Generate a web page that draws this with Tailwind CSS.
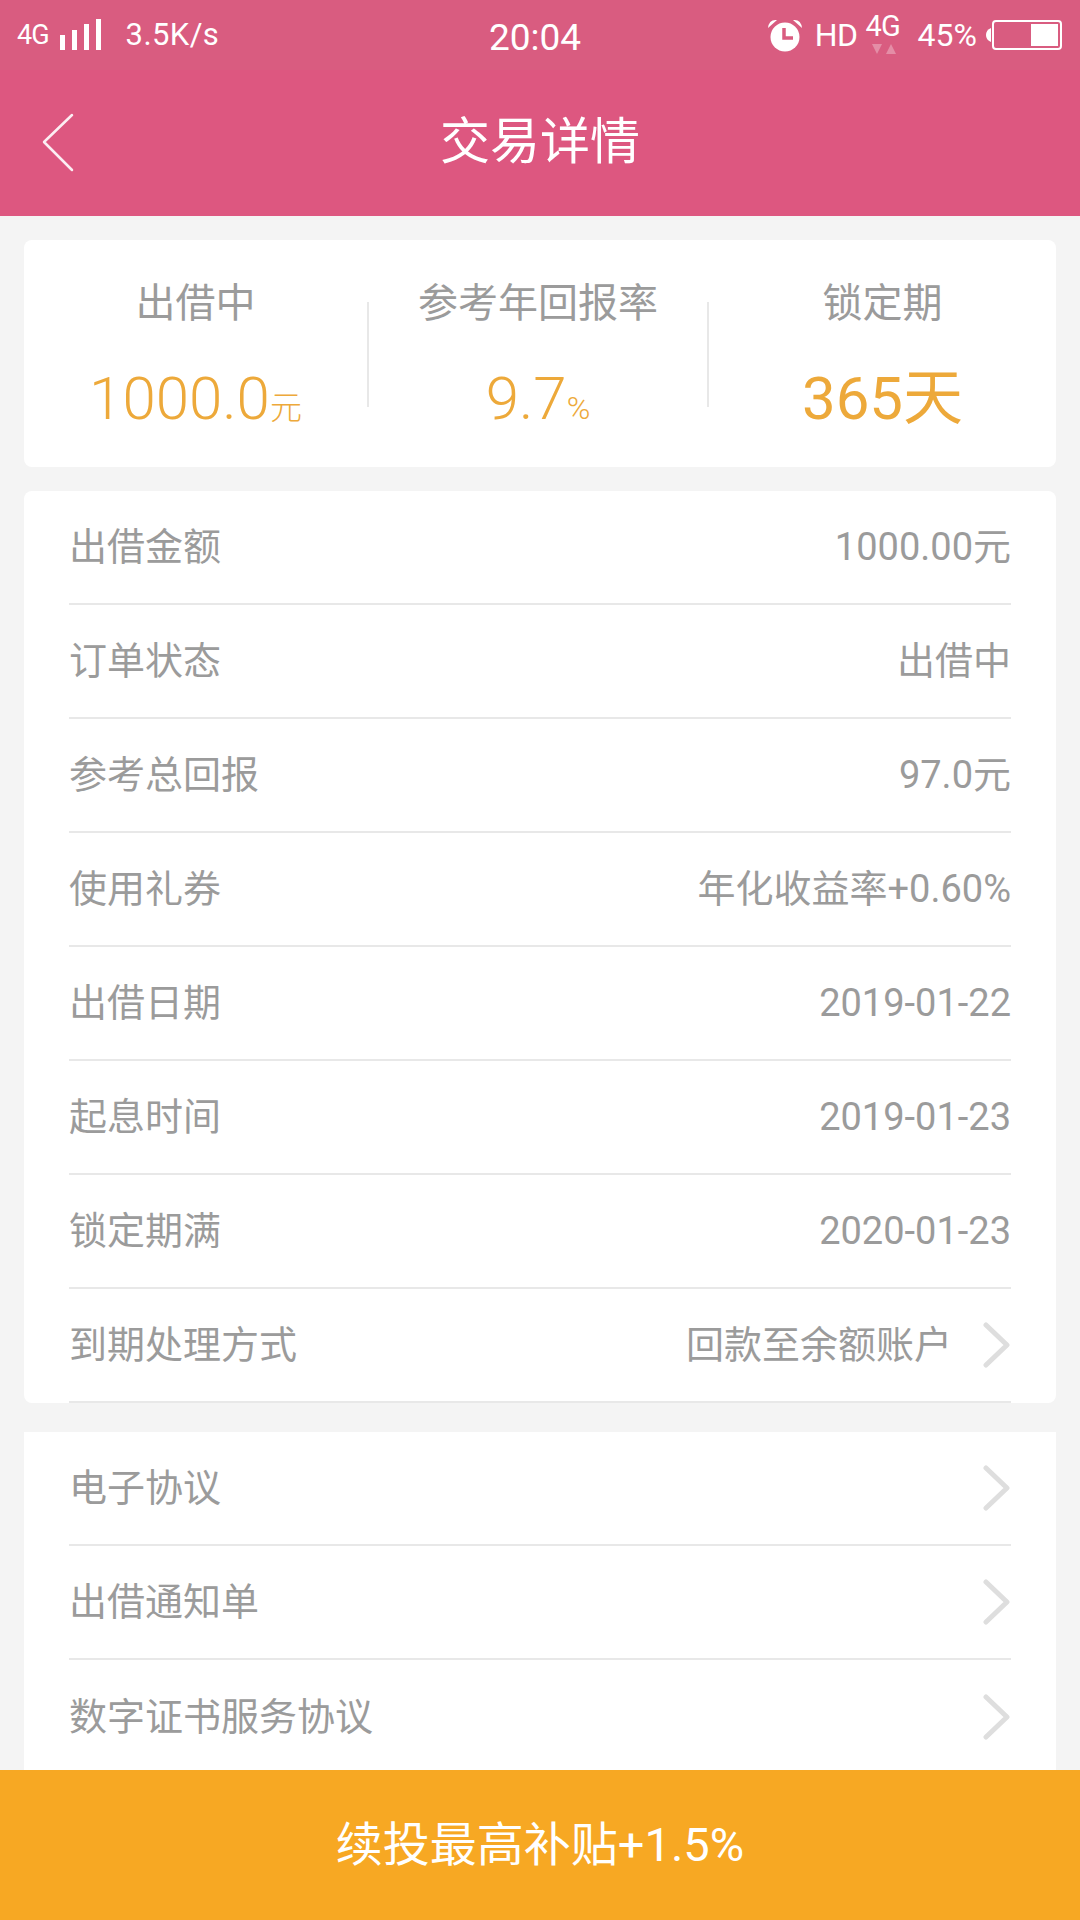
<!DOCTYPE html>
<html lang="zh">
<head>
<meta charset="utf-8">
<script src="https://cdn.jsdelivr.net/npm/@tailwindcss/browser@4"></script>
</head>
<body class="m-0">
<div class="relative w-[1080px] h-[1920px] overflow-hidden bg-[#f4f4f4] font-['Roboto','Noto_Sans_CJK_SC',sans-serif] text-[38px] text-[#9b9b9b]">
  <header class="h-[216px] bg-[#dd5780] text-white">
    <div class="h-[70px] bg-[#d95c80] flex items-center justify-between pl-[17px] pr-[18px] relative">
      <div class="flex items-center">
        <span class="text-[27px] tracking-[-1px]">4G</span>
        <svg class="ml-[11px]" width="42" height="32" viewBox="0 0 42 32" fill="#fff"><rect x="0" y="16" width="5" height="15"/><rect x="12" y="11" width="5" height="20"/><rect x="24" y="5" width="5" height="26"/><rect x="36" y="0" width="5" height="31"/></svg>
        <span class="ml-[24px] text-[31px] tracking-[0.4px]">3.5K/s</span>
      </div>
      <span class="absolute left-[489px] top-[16px] text-[37px] leading-[44px]">20:04</span>
      <div class="flex items-center">
        <svg width="36" height="34" viewBox="0 0 36 34" fill="#fff"><circle cx="18" cy="19" r="14.5"/><path d="M1 10 Q2 1 10 2 Z M35 10 Q34 1 26 2 Z"/><path d="M17 10 V20 H26" fill="none" stroke="#d95c80" stroke-width="3.5"/></svg>
        <span class="ml-[12px] text-[32px] tracking-[-0.5px]">HD</span>
        <span class="relative ml-[8px] w-[38px] h-[34px]">
          <span class="absolute left-0 top-[-9px] text-[29px] leading-[34px] tracking-[-1px]">4G</span>
          <svg class="absolute left-[6px] top-[26px]" width="26" height="11" viewBox="0 0 26 11"><path d="M0 0 H10 L5 10 Z" fill="#fff" fill-opacity=".3"/><path d="M14 10 H24 L19 0 Z" fill="#fff" fill-opacity=".3"/></svg>
        </span>
        <span class="ml-[14px] text-[32px]">45%</span>
        <svg class="ml-[9px]" width="76" height="32" viewBox="0 0 76 32"><path d="M5 9 Q0 11 0 16 Q0 21 5 23 Z" fill="#fff"/><rect x="7" y="2" width="68" height="28" rx="3" fill="none" stroke="#fff" stroke-width="2"/><rect x="45" y="5" width="27" height="22" fill="#fff"/></svg>
      </div>
    </div>
    <div class="h-[146px] relative flex items-center justify-center">
      <svg class="absolute left-[42px] top-[43px]" width="32" height="60" viewBox="0 0 32 60" fill="none" stroke="#fff" stroke-opacity=".9" stroke-width="2.5" stroke-linecap="round" stroke-linejoin="round"><path d="M30 2 L2 29 L30 57"/></svg>
      <h1 class="m-0 text-[50px] font-normal leading-[60px] mt-[-2px]">交易详情</h1>
    </div>
  </header>

  <main class="px-[24px] pt-[24px]">
    <section class="h-[227px] bg-white rounded-[8px] grid grid-cols-[343px_342px_347px]">
      <div class="flex flex-col items-center pt-[36px]">
        <span class="text-[40px] leading-[56px]">出借中</span>
        <span class="mt-[32px] text-[#eda93a] text-[60px] leading-[70px] font-light">1000.0<span class="text-[32px]">元</span></span>
      </div>
      <div class="relative flex flex-col items-center pt-[36px] before:absolute before:left-0 before:top-[62px] before:h-[105px] before:w-[2px] before:bg-[#e8e8e8] after:absolute after:right-0 after:top-[62px] after:h-[105px] after:w-[2px] after:bg-[#e8e8e8]">
        <span class="text-[40px] leading-[56px]">参考年回报率</span>
        <span class="mt-[32px] text-[#eda93a] text-[60px] leading-[70px] font-light">9.7<span class="text-[32px]">%</span></span>
      </div>
      <div class="flex flex-col items-center pt-[36px]">
        <span class="text-[40px] leading-[56px]">锁定期</span>
        <span class="mt-[32px] text-[#eda93a] text-[60px] leading-[70px]">365天</span>
      </div>
    </section>

    <section class="mt-[24px] h-[912px] bg-white rounded-[8px] px-[45px]">
      <div class="h-[114px] border-b-2 border-[#e8e8e8] flex items-center justify-between"><span>出借金额</span><span>1000.00元</span></div>
      <div class="h-[114px] border-b-2 border-[#e8e8e8] flex items-center justify-between"><span>订单状态</span><span>出借中</span></div>
      <div class="h-[114px] border-b-2 border-[#e8e8e8] flex items-center justify-between"><span>参考总回报</span><span>97.0元</span></div>
      <div class="h-[114px] border-b-2 border-[#e8e8e8] flex items-center justify-between"><span>使用礼券</span><span>年化收益率+0.60%</span></div>
      <div class="h-[114px] border-b-2 border-[#e8e8e8] flex items-center justify-between"><span>出借日期</span><span>2019-01-22</span></div>
      <div class="h-[114px] border-b-2 border-[#e8e8e8] flex items-center justify-between"><span>起息时间</span><span>2019-01-23</span></div>
      <div class="h-[114px] border-b-2 border-[#e8e8e8] flex items-center justify-between"><span>锁定期满</span><span>2020-01-23</span></div>
      <div class="h-[114px] border-b-2 border-[#e8e8e8] flex items-center justify-between"><span>到期处理方式</span><span class="flex items-center">回款至余额账户<svg class="ml-[31px]" width="28" height="46" viewBox="0 0 28 46" fill="none" stroke="#dedede" stroke-width="5" stroke-linecap="round" stroke-linejoin="round"><path d="M3 3 L24 23 L3 43"/></svg></span></div>
    </section>

    <section class="mt-[29px] bg-white px-[45px]">
      <div class="h-[114px] border-b-2 border-[#e8e8e8] flex items-center justify-between"><span>电子协议</span><svg width="28" height="46" viewBox="0 0 28 46" fill="none" stroke="#dedede" stroke-width="5" stroke-linecap="round" stroke-linejoin="round"><path d="M3 3 L24 23 L3 43"/></svg></div>
      <div class="h-[114px] border-b-2 border-[#e8e8e8] flex items-center justify-between"><span>出借通知单</span><svg width="28" height="46" viewBox="0 0 28 46" fill="none" stroke="#dedede" stroke-width="5" stroke-linecap="round" stroke-linejoin="round"><path d="M3 3 L24 23 L3 43"/></svg></div>
      <div class="h-[114px] flex items-center justify-between"><span>数字证书服务协议</span><svg width="28" height="46" viewBox="0 0 28 46" fill="none" stroke="#dedede" stroke-width="5" stroke-linecap="round" stroke-linejoin="round"><path d="M3 3 L24 23 L3 43"/></svg></div>
    </section>
  </main>

  <button class="absolute left-0 bottom-0 w-full h-[150px] bg-[#f7a823] text-white text-[47px] flex items-center justify-center">续投最高补贴+1.5%</button>
</div>
</body>
</html>
